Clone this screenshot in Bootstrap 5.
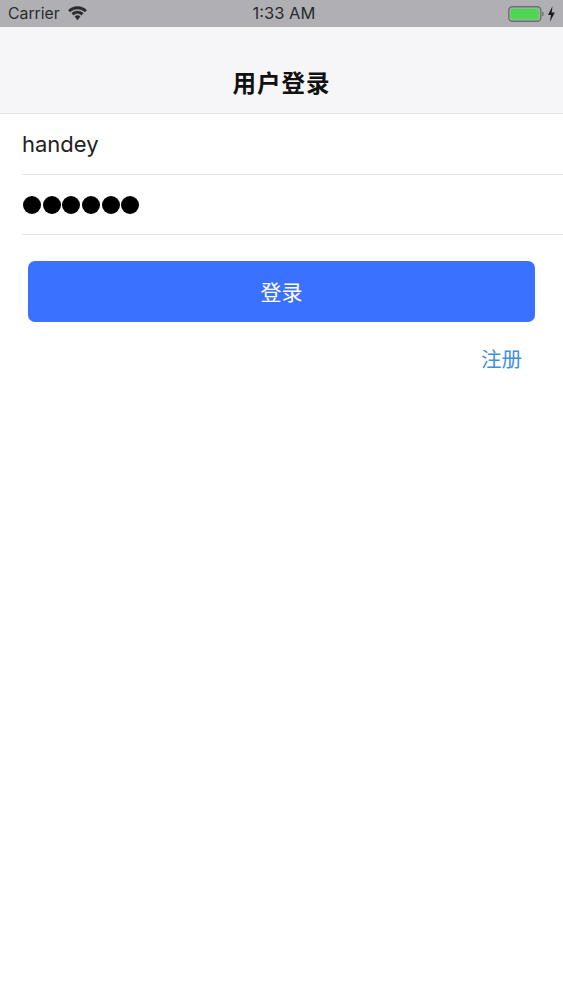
<!DOCTYPE html>
<html lang="zh">
<head>
<meta charset="utf-8">
<title>用户登录</title>
<link href="https://cdn.jsdelivr.net/npm/bootstrap@5.3.0/dist/css/bootstrap.min.css" rel="stylesheet">
<style>
html,body{background:#fff;font-family:"Inter","Liberation Sans","Noto Sans CJK SC",sans-serif;}
.status-strip{height:27px;background:#b0b0b4;color:#2a2a2c;font-size:15.8px;padding:0 6px 0 8px;position:relative;}
.status-time{position:absolute;left:0;right:0;top:0;line-height:27px;text-align:center;font-size:16.500px;padding-left:5px;}
.status-left{gap:8px;line-height:27px;z-index:1;}
.status-right{z-index:1;}
.wifi-mark path{stroke:#2a2a2c;stroke-width:.5px;}
.title-bar{height:87px;background:#f6f6f8;border-bottom:1px solid #e4e4e6;padding-top:37px;}
.title-text{font-size:23.500px;line-height:36px;font-weight:600;color:#111;letter-spacing:1px;font-family:"Noto Sans CJK SC",sans-serif;text-align:center;}
.field-row{margin-left:22px;height:60px;border-bottom:1px solid #e6e6e8;display:flex;align-items:center;}
.field-first{height:61px;padding-top:1px;}
.field-name{font-size:22px;color:#222;line-height:1;padding-bottom:1px;}
.dots-row{gap:1.700px;padding-left:1px;}
.pw-dot{width:18px;height:18px;border-radius:50%;background:#000;}
.login-btn{display:block;width:507px;height:61px;margin:26px 0 0 28px;background:#3a72ff;border:0;border-radius:7px;color:#fff;font-size:21px;line-height:58px;padding:0 0 2px;text-align:center;font-family:"Noto Sans CJK SC",sans-serif;}
.login-btn:hover,.login-btn:active{background:#3a72ff!important;color:#fff!important;}
.register-row{padding:20px 41px 0 0;}
.register-link{font-size:20.500px;line-height:33px;color:#3f8fdc;text-decoration:none;font-family:"Noto Sans CJK SC",sans-serif;}
</style>
</head>
<body>
<div class="status-strip d-flex justify-content-between align-items-center">
  <div class="status-left d-flex align-items-center position-relative">
    <span>Carrier</span>
    <svg class="wifi-mark" width="19" height="15" viewBox="0 0 19 14" aria-hidden="true"><path fill="#2a2a2c" d="M9.500 0C6 0 2.800 1.300.4 3.600l1.800 1.900C4.100 3.700 6.700 2.600 9.500 2.600s5.400 1.100 7.300 2.900l1.800-1.900C16.200 1.300 13 0 9.500 0z"/><path fill="#2a2a2c" d="M9.500 4.500c-2.200 0-4.200.8-5.700 2.300l1.800 1.900c1-1 2.400-1.600 3.900-1.600s2.900.6 3.900 1.600l1.800-1.900c-1.500-1.500-3.500-2.300-5.700-2.300z"/><path fill="#2a2a2c" d="M9.500 9c-1 0-1.900.4-2.600 1l2.600 3.500 2.600-3.500c-.7-.6-1.600-1-2.600-1z"/></svg>
  </div>
  <div class="status-time">1:33 AM</div>
  <div class="status-right d-flex align-items-center position-relative">
    <svg width="49" height="16" viewBox="0 0 49 16" aria-hidden="true"><rect x=".8" y=".8" width="32" height="14.400" rx="3.500" fill="none" stroke="#6e6e70" stroke-width="1.400"/><rect x="2.500" y="2.500" width="28.600" height="11" rx="1.800" fill="#4fd655"/><rect x="34.200" y="6" width="1.300" height="4" fill="#6e6e70"/><path fill="#1c1c1e" d="M44.500 0 40 9h3l-1.200 7 5-9.500h-3.100z"/></svg>
  </div>
</div>
<div class="title-bar"><div class="title-text">用户登录</div></div>
<div class="field-row field-first"><span class="field-name">handey</span></div>
<div class="field-row"><div class="dots-row d-flex"><span class="pw-dot"></span><span class="pw-dot"></span><span class="pw-dot"></span><span class="pw-dot"></span><span class="pw-dot"></span><span class="pw-dot"></span></div></div>
<button type="button" class="btn login-btn">登录</button>
<div class="register-row d-flex justify-content-end"><a href="#" class="register-link">注册</a></div>
<script src="https://cdn.jsdelivr.net/npm/bootstrap@5.3.0/dist/js/bootstrap.bundle.min.js"></script>
</body>
</html>
